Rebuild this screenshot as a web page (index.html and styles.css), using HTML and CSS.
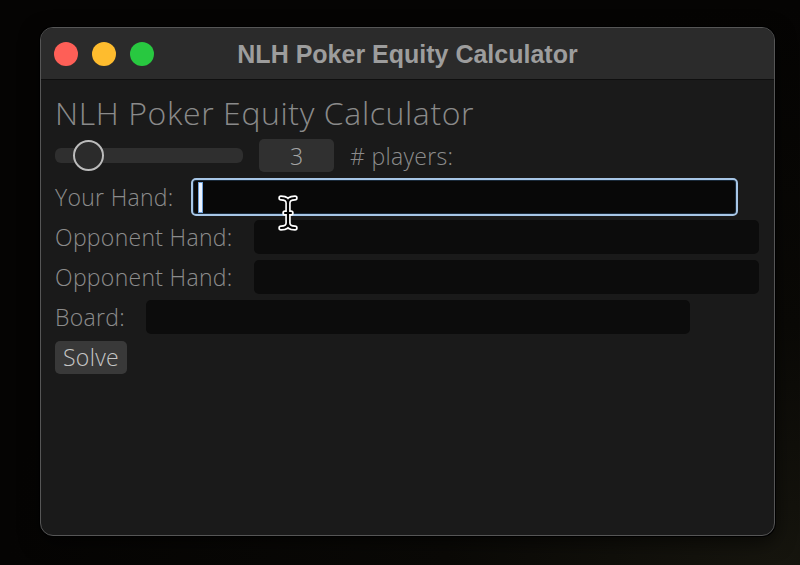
FILE: index.html
```html
<!DOCTYPE html>
<html>
<head>
<meta charset="utf-8">
<link rel="stylesheet" href="styles.css">
</head>
<body>
<div class="window">
  <div class="titlebar">
    <div class="lights">
      <span class="light red"></span>
      <span class="light yellow"></span>
      <span class="light green"></span>
    </div>
    <div class="win-title">NLH Poker Equity Calculator</div>
    <div></div>
  </div>
  <div class="content">
    <h1 class="heading">NLH Poker Equity Calculator</h1>
    <div class="row slider-row">
      <div class="track"><span class="knob"></span></div>
      <div class="numbox">3</div>
      <span class="label">#&nbsp;players:</span>
    </div>
    <div class="row hand-row">
      <span class="label">Your Hand:</span>
      <div class="field focused w-hand"><span class="caret"></span></div>
    </div>
    <div class="row">
      <span class="label">Opponent Hand:</span>
      <div class="field grow"></div>
    </div>
    <div class="row">
      <span class="label">Opponent Hand:</span>
      <div class="field grow"></div>
    </div>
    <div class="row">
      <span class="label">Board:</span>
      <div class="field w-board"></div>
    </div>
    <div class="row">
      <button class="solve">Solve</button>
    </div>
  </div>
</div>
<svg class="ibeam" width="22" height="38" viewBox="0 0 22 38">
  <path d="M4 4 Q11 4 11 9 Q11 4 18 4 M11 9 V29 M4 34 Q11 34 11 29 Q11 34 18 34 M8 19 H14" fill="none" stroke="#fff" stroke-width="5.5" stroke-linecap="round" stroke-linejoin="round"/>
  <path d="M4 4 Q11 4 11 9 Q11 4 18 4 M11 9 V29 M4 34 Q11 34 11 29 Q11 34 18 34 M8 19 H14" fill="none" stroke="#000" stroke-width="2.2" stroke-linecap="round" stroke-linejoin="round"/>
</svg>
</body>
</html>
```
FILE: styles.css
```css
html, body {
  margin: 0;
  padding: 0;
}
body {
  width: 800px;
  height: 565px;
  overflow: hidden;
  background: radial-gradient(ellipse at 97% 100%, #16150e 0%, #0a0906 30%, #050403 70%);
  padding: 27px 0 0 40px;
  box-sizing: border-box;
  font-family: "Open Sans", "Liberation Sans", sans-serif;
  position: relative;
}
.window {
  width: 735px;
  height: 509px;
  box-sizing: border-box;
  border: 1px solid #565656;
  border-radius: 13px;
  overflow: hidden;
  background: #1a1a1a;
  box-shadow: 0 0 0 1px #000, 0 6px 20px rgba(0,0,0,0.6);
  display: flex;
  flex-direction: column;
}
.titlebar {
  height: 51px;
  flex: none;
  background: #2b2b2b;
  border-bottom: 1px solid #0f0f0f;
  display: grid;
  grid-template-columns: 1fr auto 1fr;
  align-items: center;
}
.lights {
  display: flex;
  gap: 14px;
  padding-left: 13px;
  padding-top: 1px;
}
.light {
  width: 24px;
  height: 24px;
  border-radius: 50%;
  display: block;
}
.red { background: #fe5f57; }
.yellow { background: #febc2e; }
.green { background: #28c840; }
.win-title {
  font-family: "Liberation Sans", Arial, sans-serif;
  font-weight: bold;
  font-size: 25px;
  color: #9d9d9d;
  padding-top: 1px;
}
.content {
  padding: 14px 15px 0 14px;
  display: flex;
  flex-direction: column;
  gap: 6px;
}
.heading {
  margin: 0;
  font-weight: 300;
  font-size: 32px;
  letter-spacing: 0.6px;
  line-height: 38px;
  color: #8a8a8a;
  white-space: nowrap;
}
.row {
  display: flex;
  align-items: center;
  height: 34px;
}
.slider-row {
  height: 33px;
  margin-top: 1px;
}
.hand-row {
  height: 38px;
  margin-bottom: -2px;
}
.label {
  font-weight: 300;
  font-size: 23px;
  letter-spacing: 0.3px;
  color: #8c8c8c;
  margin-right: 21px;
  white-space: nowrap;
}
.track {
  width: 188px;
  height: 15px;
  border-radius: 6px;
  background: #2f2f2f;
  display: flex;
  align-items: center;
  padding-left: 18px;
  box-sizing: border-box;
}
.knob {
  width: 31px;
  height: 31px;
  box-sizing: border-box;
  border-radius: 50%;
  border: 2px solid #bcbcbc;
  background: #2b2b2b;
  flex: none;
}
.numbox {
  width: 75px;
  height: 33px;
  margin-left: 16px;
  margin-right: 16px;
  background: #303030;
  border-radius: 5px;
  color: #a6a6a6;
  font-weight: 300;
  font-size: 23px;
  display: flex;
  align-items: center;
  justify-content: center;
}
.field {
  height: 34px;
  background: #0c0c0c;
  border-radius: 5px;
  box-sizing: border-box;
  display: flex;
  align-items: center;
}
.grow { flex: 1; }
.w-board { width: 544px; }
.w-hand { width: 547px; }
.focused {
  height: 38px;
  margin-left: -4px;
  background: #080808;
  border: 2px solid #a7c6e6;
  box-shadow: inset 0 0 0 1px #1a2a3a;
  padding-left: 5px;
}
.caret {
  width: 3px;
  height: 29px;
  background: #eaf2ff;
  border: 1px solid #6e9fd6;
  display: block;
}
.solve {
  height: 33px;
  padding: 0 8px;
  margin: 0;
  border: none;
  border-radius: 5px;
  background: #393939;
  color: #c6c6c6;
  font-family: "Open Sans", "Liberation Sans", sans-serif;
  font-weight: 300;
  font-size: 23px;
  letter-spacing: 0.3px;
  line-height: 33px;
}
.ibeam {
  position: absolute;
  left: 277px;
  top: 194px;
}
```
